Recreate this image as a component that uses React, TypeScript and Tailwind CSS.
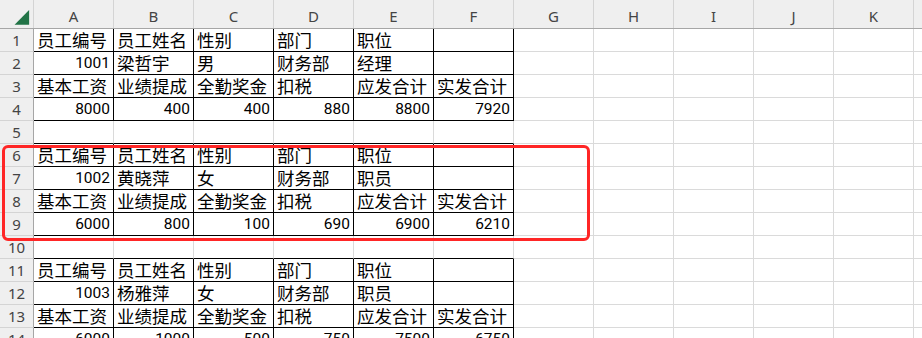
import React from "react";

type Cell = { t: string; n?: boolean };

const cols = ["A", "B", "C", "D", "E", "F", "G", "H", "I", "J", "K", ""];

const hdr1: Cell[] = [{ t: "员工编号" }, { t: "员工姓名" }, { t: "性别" }, { t: "部门" }, { t: "职位" }, { t: "" }];
const hdr2: Cell[] = [{ t: "基本工资" }, { t: "业绩提成" }, { t: "全勤奖金" }, { t: "扣税" }, { t: "应发合计" }, { t: "实发合计" }];

const info = (id: string, name: string, sex: string, pos: string): Cell[] => [
  { t: id, n: true },
  { t: name },
  { t: sex },
  { t: "财务部" },
  { t: pos },
  { t: "" },
];
const nums = (a: string[]): Cell[] => a.map((t) => ({ t, n: true }));

const rows: (Cell[] | null)[] = [
  hdr1,
  info("1001", "梁哲宇", "男", "经理"),
  hdr2,
  nums(["8000", "400", "400", "880", "8800", "7920"]),
  null,
  hdr1,
  info("1002", "黄晓萍", "女", "职员"),
  hdr2,
  nums(["6000", "800", "100", "690", "6900", "6210"]),
  null,
  hdr1,
  info("1003", "杨雅萍", "女", "职员"),
  hdr2,
  nums(["6000", "1000", "500", "750", "7500", "6750"]),
];

export default function App() {
  return (
    <div className="relative w-[922px] h-[338px] overflow-hidden bg-white">
      {/* column header */}
      <div className="flex h-[29px] bg-[#efefef] border-b border-[#a6a6a6]">
        <div className="w-[34px] shrink-0 border-r border-[#d4d4d4] flex items-center justify-center">
          <svg width="34" height="28" viewBox="0 0 34 28">
            <polygon points="30,10 30,25 15,25" fill="#217346" />
          </svg>
        </div>
        {cols.map((c, i) => (
          <div
            key={i}
            className="w-[80px] shrink-0 border-r border-[#d4d4d4] flex items-end justify-center pb-[3px] text-[15px] leading-[18px] text-[#444444] font-['Noto_Sans',sans-serif]"
          >
            {c}
          </div>
        ))}
      </div>
      {rows.map((row, ri) => {
        const next = rows[ri + 1];
        return (
          <div key={ri} className="flex h-[23px]">
            <div className="w-[34px] shrink-0 bg-[#efefef] border-r border-b border-r-[#a6a6a6] border-b-[#d4d4d4] flex items-end justify-center pb-[2px] text-[15px] leading-[18px] text-[#444444] font-['Noto_Sans',sans-serif]">
              {ri + 1}
            </div>
            {cols.map((c, ci) => {
              const inTable = ci < 6;
              const cell = row && inTable ? row[ci] : null;
              const blackR = row && inTable;
              const blackB = inTable && (row !== null || (next !== null && next !== undefined));
              return (
                <div
                  key={ci}
                  className={`w-[80px] shrink-0 border-r border-b flex items-end whitespace-nowrap ${
                    blackR ? "border-r-black" : "border-r-[#dadada]"
                  } ${blackB ? "border-b-black" : "border-b-[#dadada]"} ${
                    cell && cell.n ? "justify-end pr-[3px]" : "justify-start pl-[3px]"
                  }`}
                >
                  {cell && cell.t ? (
                    cell.n ? (
                      <span className="text-[15.5px] leading-[18px] pb-[2px] text-black font-['Roboto',sans-serif]">
                        {cell.t}
                      </span>
                    ) : (
                      <span className="text-[17.5px] leading-[20px] pb-[1px] text-black font-['Noto_Sans_CJK_SC',sans-serif]">
                        {cell.t}
                      </span>
                    )
                  ) : null}
                </div>
              );
            })}
          </div>
        );
      })}
      <div className="absolute left-[2px] top-[145px] w-[588px] h-[96px] border-[3px] border-[#ff2626] rounded-[6px]" />
    </div>
  );
}
